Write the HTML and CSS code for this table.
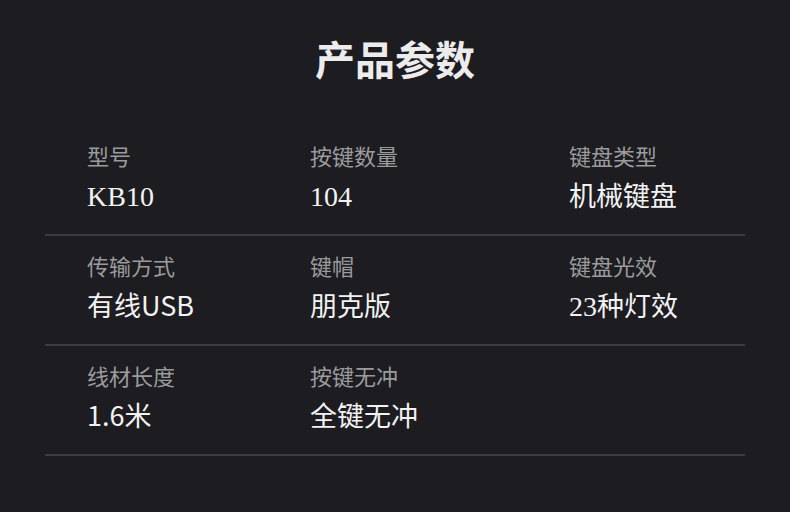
FILE: index.html
```html
<!DOCTYPE html>
<html lang="zh">
<head>
<meta charset="utf-8">
<title>产品参数</title>
<link rel="stylesheet" href="styles.css">
</head>
<body>
<div class="page">
  <h1 class="title">产品参数</h1>
  <div class="specs">
    <div class="row">
      <div class="cell"><div class="label">型号</div><div class="value"><span class="serif">KB10</span></div></div>
      <div class="cell"><div class="label">按键数量</div><div class="value"><span class="serif">104</span></div></div>
      <div class="cell"><div class="label">键盘类型</div><div class="value">机械键盘</div></div>
    </div>
    <div class="row">
      <div class="cell"><div class="label">传输方式</div><div class="value">有线USB</div></div>
      <div class="cell"><div class="label">键帽</div><div class="value">朋克版</div></div>
      <div class="cell"><div class="label">键盘光效</div><div class="value"><span class="serif">23</span>种灯效</div></div>
    </div>
    <div class="row last">
      <div class="cell"><div class="label">线材长度</div><div class="value">1.6米</div></div>
      <div class="cell"><div class="label">按键无冲</div><div class="value">全键无冲</div></div>
      <div class="cell"></div>
    </div>
  </div>
</div>
</body>
</html>
```
FILE: styles.css
```css
html, body {
  margin: 0;
  padding: 0;
  background: #1c1c21;
}
.page {
  width: 790px;
  height: 512px;
  background: #1c1c21;
  font-family: "Noto Sans CJK SC", "Noto Sans", sans-serif;
  overflow: hidden;
}
.title {
  margin: 0;
  padding-top: 30px;
  height: 126px;
  box-sizing: border-box;
  line-height: 56px;
  font-size: 40px;
  font-weight: 700;
  color: #ececec;
  text-align: center;
}
.specs {
  margin: 0 45px;
}
.row {
  display: grid;
  grid-template-columns: 223px 259px 1fr;
  padding: 17px 0 21px 42px;
  border-bottom: 2px solid #3b3b40;
}
.row.last {
  padding-bottom: 23px;
}
.label {
  font-size: 22px;
  line-height: 24px;
  color: #9b9b9d;
}
.value {
  margin-top: 12px;
  font-size: 27px;
  line-height: 32px;
  color: #f2f2f2;
}
.serif {
  font-family: "Liberation Serif", "Noto Sans CJK SC", serif;
  font-size: 28px;
}
```
